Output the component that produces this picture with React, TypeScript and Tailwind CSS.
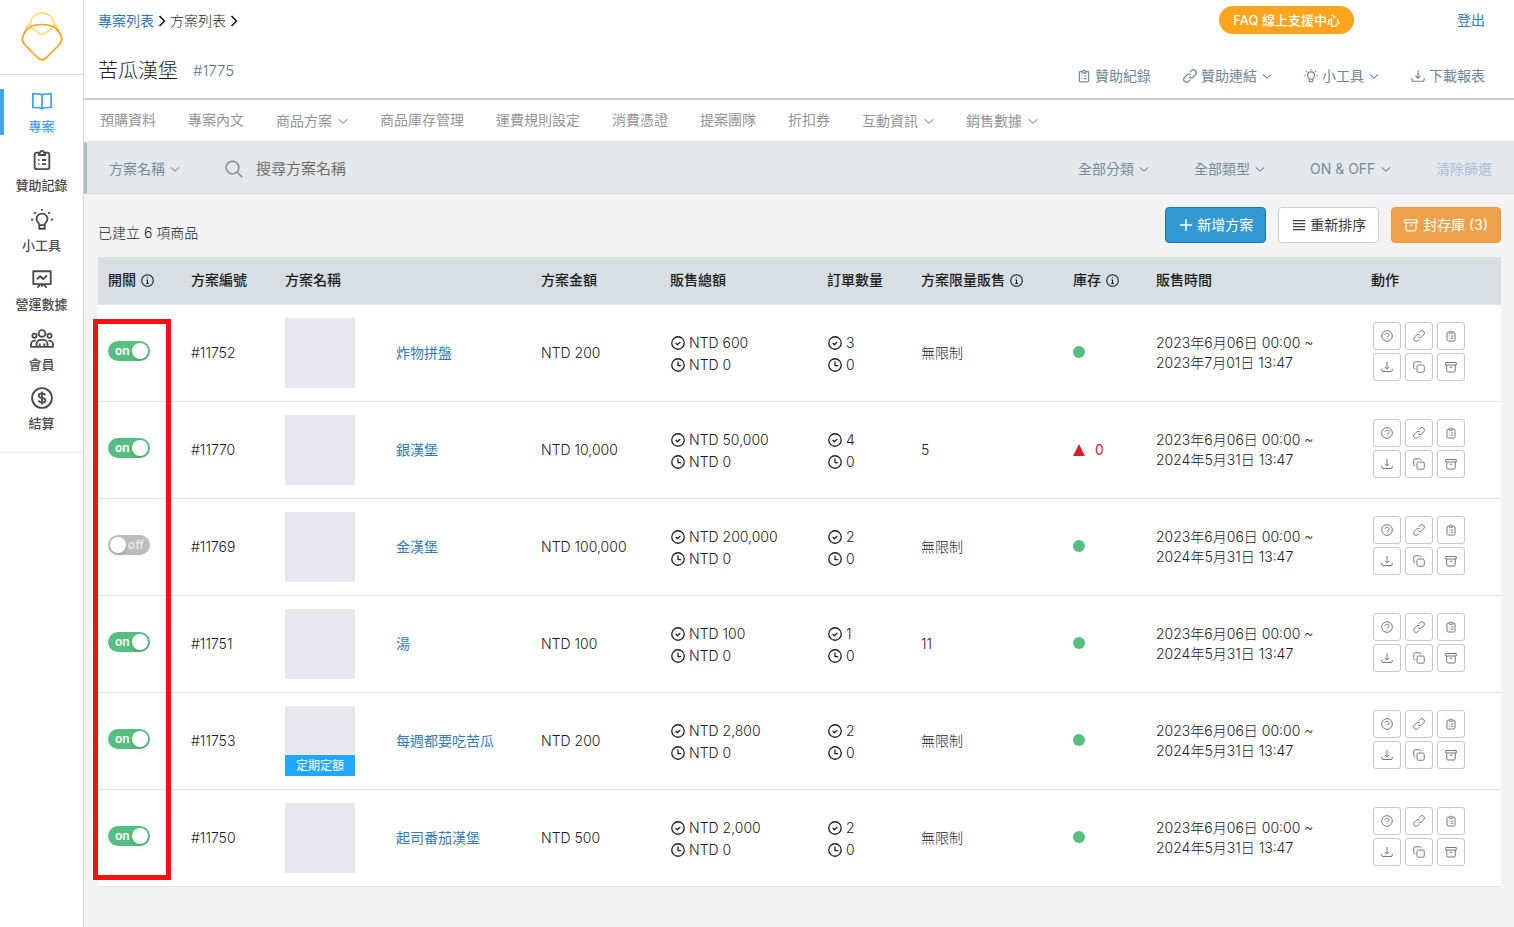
import type { ReactNode } from "react";
import clsx from "clsx";

const ICONS = {
  book: (
    <path d="M12 5.5C10 4 6 4 2 4v15c4 0 8 0 10 1.500C14 19 18 19 22 19V4c-4 0-8 0-10 1.500zM12 5.500v15" />
  ),
  clipboard: (
    <>
      <path d="M8 4H6.5A2.5 2.5 0 0 0 4 6.5v13A2.5 2.5 0 0 0 6.5 22h11a2.5 2.5 0 0 0 2.5-2.5v-13A2.5 2.5 0 0 0 17.5 4H16" />
      <path d="M8.5 6.5V4H10a2 2 0 0 1 4 0h1.500v2.500z" />
      <path d="M7.800 12h1.400M12 12h4.500M7.800 16.500h1.400M12 16.500h4.500" />
    </>
  ),
  bulb: (
    <path d="M9 17c0-1.500-3-3-3-6a6 6 0 0 1 12 0c0 3-3 4.500-3 6v4.500H9zM9 17.500h6M12 0v2M3.500 3.500l1.700 1.700M20.500 3.500l-1.700 1.700M0 11.500h2.500M21.500 11.500H24" />
  ),
  board: (
    <path d="M2.500 3.500h19v14h-19zM12 17.500v3M10 18l-3 3.500M14 18l3 3.500M6.500 12.500l3.500-3.500 3.500 3L17.500 8" />
  ),
  group: (
    <>
      <circle cx="12" cy="6" r="3.700" />
      <circle cx="3.800" cy="8.500" r="2.300" />
      <circle cx="20.200" cy="8.500" r="2.300" />
      <path d="M6 20.500v-3a4.500 4.500 0 0 1 4.500-4.500h3a4.500 4.500 0 0 1 4.500 4.500v3zM6 20.500H0v-2.700A3.800 3.800 0 0 1 5 14M18 20.500h6v-2.700A3.800 3.800 0 0 0 19 14M9.500 20v-3M14.500 20v-3" />
    </>
  ),
  dollar: (
    <>
      <circle cx="12" cy="12" r="10.800" />
      <path d="M15.500 9c-.5-1.300-1.700-1.900-3.500-1.900-2 0-3.500.9-3.500 2.400 0 3.400 7.200 1.500 7.200 5 0 1.500-1.600 2.500-3.700 2.500-1.900 0-3.200-.8-3.700-2.200M12 5v14" />
    </>
  ),
  link: (
    <path d="M10.300 13.700a5 5 0 0 0 7 0l4-4a4.900 4.900 0 0 0-7-7l-3 3M13.700 10.300a5 5 0 0 0-7 0l-4 4a4.900 4.900 0 0 0 7 7l3-3" />
  ),
  download: (
    <path d="M12 2v14M7.500 11.500L12 16l4.500-4.500M1.500 15.500v3A2.500 2.500 0 0 0 4 21h16a2.500 2.500 0 0 0 2.500-2.500v-3" />
  ),
  chevronDown: <path d="M2 8l10 9L22 8" />,
  chevronRight: <path d="M7 2l10 10L7 22" />,
  search: (
    <>
      <circle cx="10" cy="10" r="8.500" />
      <path d="M16 16l7 7" />
    </>
  ),
  plus: <path d="M12 0v24M0 12h24" />,
  bars: <path d="M0 3h24M0 9h24M0 15h24M0 21h24" />,
  archive: (
    <path d="M1.500 3h21v5h-21zM3.500 8v11.500A2.500 2.500 0 0 0 6 22h12a2.500 2.500 0 0 0 2.500-2.500V8M9.500 12.500h5" />
  ),
  copy: (
    <>
      <rect x="8" y="8" width="14.500" height="14.500" rx="3" />
      <path d="M4.500 16A3 3 0 0 1 1.500 13V4.500a3 3 0 0 1 3-3H13a3 3 0 0 1 3 3" />
    </>
  ),
  help: (
    <>
      <circle cx="12" cy="12" r="10.700" />
      <path d="M7.500 9.500c1-2.500 3-3 4.800-3 2.500 0 4.200 1.300 4.200 3.200 0 2.500-4.500 2.500-4.500 5M12 17v1.500" />
    </>
  ),
  info: (
    <>
      <circle cx="12" cy="12" r="10.700" />
      <path d="M12 6v2M10 11h2v6.500M9.500 17.500h5" />
    </>
  ),
  check: (
    <>
      <circle cx="12" cy="12" r="10.700" />
      <path d="M8 12l3 3 5-5" />
    </>
  ),
  clock: (
    <>
      <circle cx="12" cy="12" r="10.700" />
      <path d="M12 6v7h5.500" />
    </>
  ),
};

type IconName = keyof typeof ICONS;

function Icon({
  name,
  className,
  stroke = 2,
}: {
  name: IconName;
  className?: string;
  stroke?: number;
}) {
  return (
    <svg
      viewBox="0 0 24 24"
      fill="none"
      stroke="currentColor"
      strokeWidth={stroke}
      strokeLinejoin="round"
      aria-hidden="true"
      className={clsx("shrink-0 overflow-visible", className)}
    >
      {ICONS[name]}
    </svg>
  );
}

const SIDE_ITEMS: { icon: IconName; label: string; active?: boolean }[] = [
  { icon: "book", label: "專案", active: true },
  { icon: "clipboard", label: "贊助記錄" },
  { icon: "bulb", label: "小工具" },
  { icon: "board", label: "營運數據" },
  { icon: "group", label: "會員" },
  { icon: "dollar", label: "結算" },
];

const TABS: { label: string; menu?: boolean }[] = [
  { label: "預購資料" },
  { label: "專案內文" },
  { label: "商品方案", menu: true },
  { label: "商品庫存管理" },
  { label: "運費規則設定" },
  { label: "消費憑證" },
  { label: "提案團隊" },
  { label: "折扣券" },
  { label: "互動資訊", menu: true },
  { label: "銷售數據", menu: true },
];

const ROW_ACTIONS: { icon: IconName; label: string }[] = [
  { icon: "help", label: "問題" },
  { icon: "link", label: "連結" },
  { icon: "clipboard", label: "贊助紀錄" },
  { icon: "download", label: "下載" },
  { icon: "copy", label: "複製" },
  { icon: "archive", label: "封存" },
];

type Plan = {
  id: string;
  name: string;
  price: string;
  total: string;
  orders: number;
  limit: string;
  end: string;
  on: boolean;
  soldOut?: boolean;
  tag?: string;
};

const PLANS: Plan[] = [
  { id: "#11752", name: "炸物拼盤", price: "200", total: "600", orders: 3, limit: "無限制", end: "2023年7月01日 13:47", on: true },
  { id: "#11770", name: "銀漢堡", price: "10,000", total: "50,000", orders: 4, limit: "5", end: "2024年5月31日 13:47", on: true, soldOut: true },
  { id: "#11769", name: "金漢堡", price: "100,000", total: "200,000", orders: 2, limit: "無限制", end: "2024年5月31日 13:47", on: false },
  { id: "#11751", name: "湯", price: "100", total: "100", orders: 1, limit: "11", end: "2024年5月31日 13:47", on: true },
  { id: "#11753", name: "每週都要吃苦瓜", price: "200", total: "2,800", orders: 2, limit: "無限制", end: "2024年5月31日 13:47", on: true, tag: "定期定額" },
  { id: "#11750", name: "起司番茄漢堡", price: "500", total: "2,000", orders: 2, limit: "無限制", end: "2024年5月31日 13:47", on: true },
];

function Sidebar() {
  return (
    <aside className="w-[84px] shrink-0 border-r border-[#d5d5d5] bg-white">
      <a
        href="#"
        aria-label="首頁"
        className="flex h-[75px] justify-center border-b border-[#d8d8d8] pt-3"
      >
        <svg viewBox="0 0 42 50" fill="none" className="h-[50px] w-[42px]">
          <g stroke="#ffd966" strokeWidth="1.500">
            <path d="M9 13C10 5 15 1 21 1s11 4 12 12c0 2-1 3-3 4l-6 4.500c-2 1.300-4 1.300-6 0L12 17c-2-1-3-2-3-4z" />
            <path d="M8 12c-2 2-3.500 5-4 8M34 12c2 2 3.500 5 4 8M6.500 15L4 20M35.500 15l2.500 5" />
          </g>
          <path
            d="M21 12.500c8 0 14 2 17 7.500 4 6 3.500 9-1 14L25 46c-3 2.700-5 2.700-8 0L5 34c-4.500-5-5-8-1-14 3-5.500 9-7.500 17-7.500z"
            stroke="#f9a11b"
            strokeWidth="1.700"
          />
        </svg>
      </a>
      <nav className="border-b border-[#e5e5e5] pt-[14px] pb-5">
        <ul className="flex h-[343px] flex-col justify-between">
          {SIDE_ITEMS.map((item) => (
            <li key={item.label}>
              <a
                href="#"
                className={clsx(
                  "flex h-[46px] flex-col items-center gap-1 border-l-4 pt-px pr-1 text-[13px] leading-5 font-medium",
                  item.active
                    ? "border-[#45a3ee] text-[#45a3ee]"
                    : "border-transparent text-[#4a4a4a]",
                )}
              >
                <Icon name={item.icon} className="size-[22px]" />
                {item.label}
              </a>
            </li>
          ))}
        </ul>
      </nav>
    </aside>
  );
}

function HeaderAction({
  icon,
  label,
  menu,
}: {
  icon: IconName;
  label: string;
  menu?: boolean;
}) {
  return (
    <button type="button" className="flex items-center gap-1">
      <Icon name={icon} className="size-[14px]" />
      <span>{label}</span>
      {menu && <Icon name="chevronDown" className="ml-px size-[10px]" stroke={2.5} />}
    </button>
  );
}

function Header() {
  return (
    <header className="flex h-[100px] justify-between border-b-2 border-[#cfcfcf] bg-white pr-[29px] pl-[14px] leading-5">
      <div>
        <div className="flex items-center gap-[2px] pt-[11px]">
          <a href="#" className="font-normal text-[#337ab7]">
            專案列表
          </a>
          <Icon name="chevronRight" className="size-3" stroke={3.5} />
          <span>方案列表</span>
          <Icon name="chevronRight" className="size-3" stroke={3.5} />
        </div>
        <div className="flex items-center gap-[15px] pt-[25px]">
          <h1 className="text-xl leading-[30px]">苦瓜漢堡</h1>
          <span className="text-[15px] text-[#5f7888]">#1775</span>
        </div>
      </div>
      <div className="flex flex-col items-end">
        <div className="flex items-center gap-[103px] pt-[6px]">
          <a
            href="#"
            className="rounded-full bg-[#ffa41c] px-[14px] py-1 text-[13px] font-medium text-white"
          >
            FAQ 線上支援中心
          </a>
          <a href="#" className="font-normal text-[#337ab7]">
            登出
          </a>
        </div>
        <div className="flex gap-8 pt-8 font-normal text-[#6f8894]">
          <HeaderAction icon="clipboard" label="贊助紀錄" />
          <HeaderAction icon="link" label="贊助連結" menu />
          <HeaderAction icon="bulb" label="小工具" menu />
          <HeaderAction icon="download" label="下載報表" />
        </div>
      </div>
    </header>
  );
}

function Tabs() {
  return (
    <nav className="flex h-[43px] items-center gap-8 border-b-2 border-[#e4e4e4] bg-white px-4 font-normal text-[#949494]">
      {TABS.map((tab) =>
        tab.menu ? (
          <button key={tab.label} type="button" className="flex items-center gap-[6px]">
            {tab.label}
            <Icon name="chevronDown" className="size-[10px]" stroke={2.5} />
          </button>
        ) : (
          <a key={tab.label} href="#" className="pb-[2px]">
            {tab.label}
          </a>
        ),
      )}
    </nav>
  );
}

function FilterSelect({ label, value }: { label: string; value: string }) {
  return (
    <label className="relative flex items-center">
      <select aria-label={label} className="appearance-none bg-transparent pr-[15px]">
        <option>{value}</option>
      </select>
      <Icon
        name="chevronDown"
        className="pointer-events-none absolute right-0 size-[10px]"
        stroke={2.5}
      />
    </label>
  );
}

function FilterBar() {
  return (
    <div className="flex h-[51px] items-center border-b border-l-3 border-b-[#d5dadd] border-l-[#a9bcc7] bg-[#e5e9ec] px-[22px] pt-[2px] font-normal text-[#748b97]">
      <FilterSelect label="搜尋欄位" value="方案名稱" />
      <div className="ml-[45px] flex flex-1 items-center gap-[13px]">
        <Icon name="search" className="size-[18px] text-[#888]" />
        <input
          type="search"
          aria-label="搜尋方案名稱"
          placeholder="搜尋方案名稱"
          className="flex-1 bg-transparent text-[15px] outline-none placeholder:text-[#6d6d6d]"
        />
      </div>
      <div className="flex items-center gap-[45px]">
        <FilterSelect label="分類" value="全部分類" />
        <FilterSelect label="類型" value="全部類型" />
        <FilterSelect label="狀態" value="ON & OFF" />
        <button type="button" className="text-[#a5bdd7]">
          清除篩選
        </button>
      </div>
    </div>
  );
}

function Toggle({ on, label }: { on: boolean; label: string }) {
  return (
    <label className="relative mb-[3px] flex h-5 w-[42px]">
      <input
        type="checkbox"
        defaultChecked={on}
        aria-label={label}
        className="peer flex h-5 w-[42px] appearance-none items-center rounded-full bg-[#bcbcbc] px-[2px] before:size-4 before:rounded-full before:bg-white before:shadow-md checked:justify-end checked:bg-[#56be80]"
      />
      <span className="pointer-events-none absolute left-[7px] hidden text-xs leading-5 font-semibold text-white peer-checked:block">
        on
      </span>
      <span className="pointer-events-none absolute right-[6px] text-xs leading-5 font-semibold text-[#e8e8e8] peer-checked:hidden">
        off
      </span>
    </label>
  );
}

function IconLine({ icon, children }: { icon: IconName; children: ReactNode }) {
  return (
    <div className="flex items-center gap-1 pl-px leading-[22px]">
      <Icon name={icon} className="size-[14px]" stroke={2.2} />
      {children}
    </div>
  );
}

function Th({
  children,
  info,
  span,
}: {
  children: ReactNode;
  info?: boolean;
  span?: number;
}) {
  return (
    <th scope="col" colSpan={span} className="px-[10px] text-left font-medium">
      <span className="flex items-center gap-[5px]">
        {children}
        {info && <Icon name="info" className="size-[13px]" />}
      </span>
    </th>
  );
}

function PlanRow({ plan }: { plan: Plan }) {
  return (
    <tr className="h-[97px] border-b border-[#e2e4e8] bg-white [&>td]:px-[10px]">
      <td>
        <Toggle on={plan.on} label={plan.name} />
      </td>
      <td>{plan.id}</td>
      <td>
        <div className="flex size-[70px] flex-col justify-end bg-[#e9e8ee]">
          {plan.tag && (
            <span className="bg-[#22a7ff] text-center text-xs leading-[21px] font-normal text-white">
              {plan.tag}
            </span>
          )}
        </div>
      </td>
      <td>
        <a href="#" className="font-normal text-[#337ab7]">
          {plan.name}
        </a>
      </td>
      <td>NTD {plan.price}</td>
      <td className="pt-[2px]">
        <IconLine icon="check">NTD {plan.total}</IconLine>
        <IconLine icon="clock">NTD 0</IconLine>
      </td>
      <td className="pt-[2px]">
        <IconLine icon="check">{plan.orders}</IconLine>
        <IconLine icon="clock">0</IconLine>
      </td>
      <td>{plan.limit}</td>
      <td>
        {plan.soldOut ? (
          <span className="flex items-center gap-[10px] font-normal text-[#dc1e2d]">
            <svg viewBox="0 0 12 12" fill="currentColor" className="size-3">
              <path d="M6 0l6 12H0z" />
            </svg>
            0
          </span>
        ) : (
          <span className="mb-[2px] block size-3 rounded-full bg-[#56be80]" />
        )}
      </td>
      <td className="leading-5">
        2023年6月06日 00:00 ~
        <br />
        {plan.end}
      </td>
      <td className="pb-[2px]">
        <div className="ml-[2px] flex w-24 flex-wrap gap-x-1 gap-y-[3px]">
          {ROW_ACTIONS.map((action) => (
            <button
              key={action.label}
              type="button"
              aria-label={action.label}
              className="flex size-7 items-center justify-center rounded-[3px] border border-[#c8c8c8] bg-white text-[#777]"
            >
              <Icon name={action.icon} className="size-3" />
            </button>
          ))}
        </div>
      </td>
    </tr>
  );
}

function PlanTable() {
  return (
    <div className="relative mt-[14px]">
      <table className="w-full table-fixed border-collapse">
        <colgroup>
          <col className="w-[83px]" />
          <col className="w-[94px]" />
          <col className="w-[111px]" />
          <col />
          <col className="w-[129px]" />
          <col className="w-[157px]" />
          <col className="w-[94px]" />
          <col className="w-[152px]" />
          <col className="w-[83px]" />
          <col className="w-[215px]" />
          <col className="w-[140px]" />
        </colgroup>
        <thead>
          <tr className="h-[47px] border-b border-[#e2e4e8] bg-[#d7dfe2]">
            <Th info>開關</Th>
            <Th>方案編號</Th>
            <Th span={2}>方案名稱</Th>
            <Th>方案金額</Th>
            <Th>販售總額</Th>
            <Th>訂單數量</Th>
            <Th info>方案限量販售</Th>
            <Th info>庫存</Th>
            <Th>販售時間</Th>
            <Th>動作</Th>
          </tr>
        </thead>
        <tbody>
          {PLANS.map((plan) => (
            <PlanRow key={plan.id} plan={plan} />
          ))}
        </tbody>
      </table>
      {/* highlight around the switch column */}
      <div className="pointer-events-none absolute top-[62px] bottom-[7px] -left-[5px] w-[78px] border-5 border-[#fd0d12]" />
    </div>
  );
}

export default function App() {
  return (
    <div className="flex min-h-screen bg-[#f3f3f3] font-['Inter','Noto_Sans_CJK_TC',sans-serif] text-sm font-light text-[#1c1c1c]">
      <Sidebar />
      <div className="min-w-0 flex-1">
        <Header />
        <Tabs />
        <FilterBar />
        <main className="pt-[13px] pr-[13px] pl-[14px]">
          <div className="flex items-end justify-between">
            <p>已建立 6 項商品</p>
            <div className="flex gap-3 font-normal">
              <button
                type="button"
                className="flex h-9 items-center gap-[5px] rounded-[4px] border border-[#2472ac] bg-[#3499d2] px-3 text-white"
              >
                <Icon name="plus" className="ml-[2px] size-3" stroke={3} />
                新增方案
              </button>
              <button
                type="button"
                className="flex h-9 items-center gap-[5px] rounded-[4px] border border-[#ccc] bg-white px-3 text-[#3c3c3c]"
              >
                <Icon name="bars" className="ml-[2px] size-3" stroke={2.5} />
                重新排序
              </button>
              <button
                type="button"
                className="flex h-9 items-center gap-[5px] rounded-[4px] border border-[#eb9a3c] bg-[#eda14a] px-3 text-white"
              >
                <Icon name="archive" className="size-[14px]" />
                封存庫 (3)
              </button>
            </div>
          </div>
          <PlanTable />
        </main>
      </div>
    </div>
  );
}
